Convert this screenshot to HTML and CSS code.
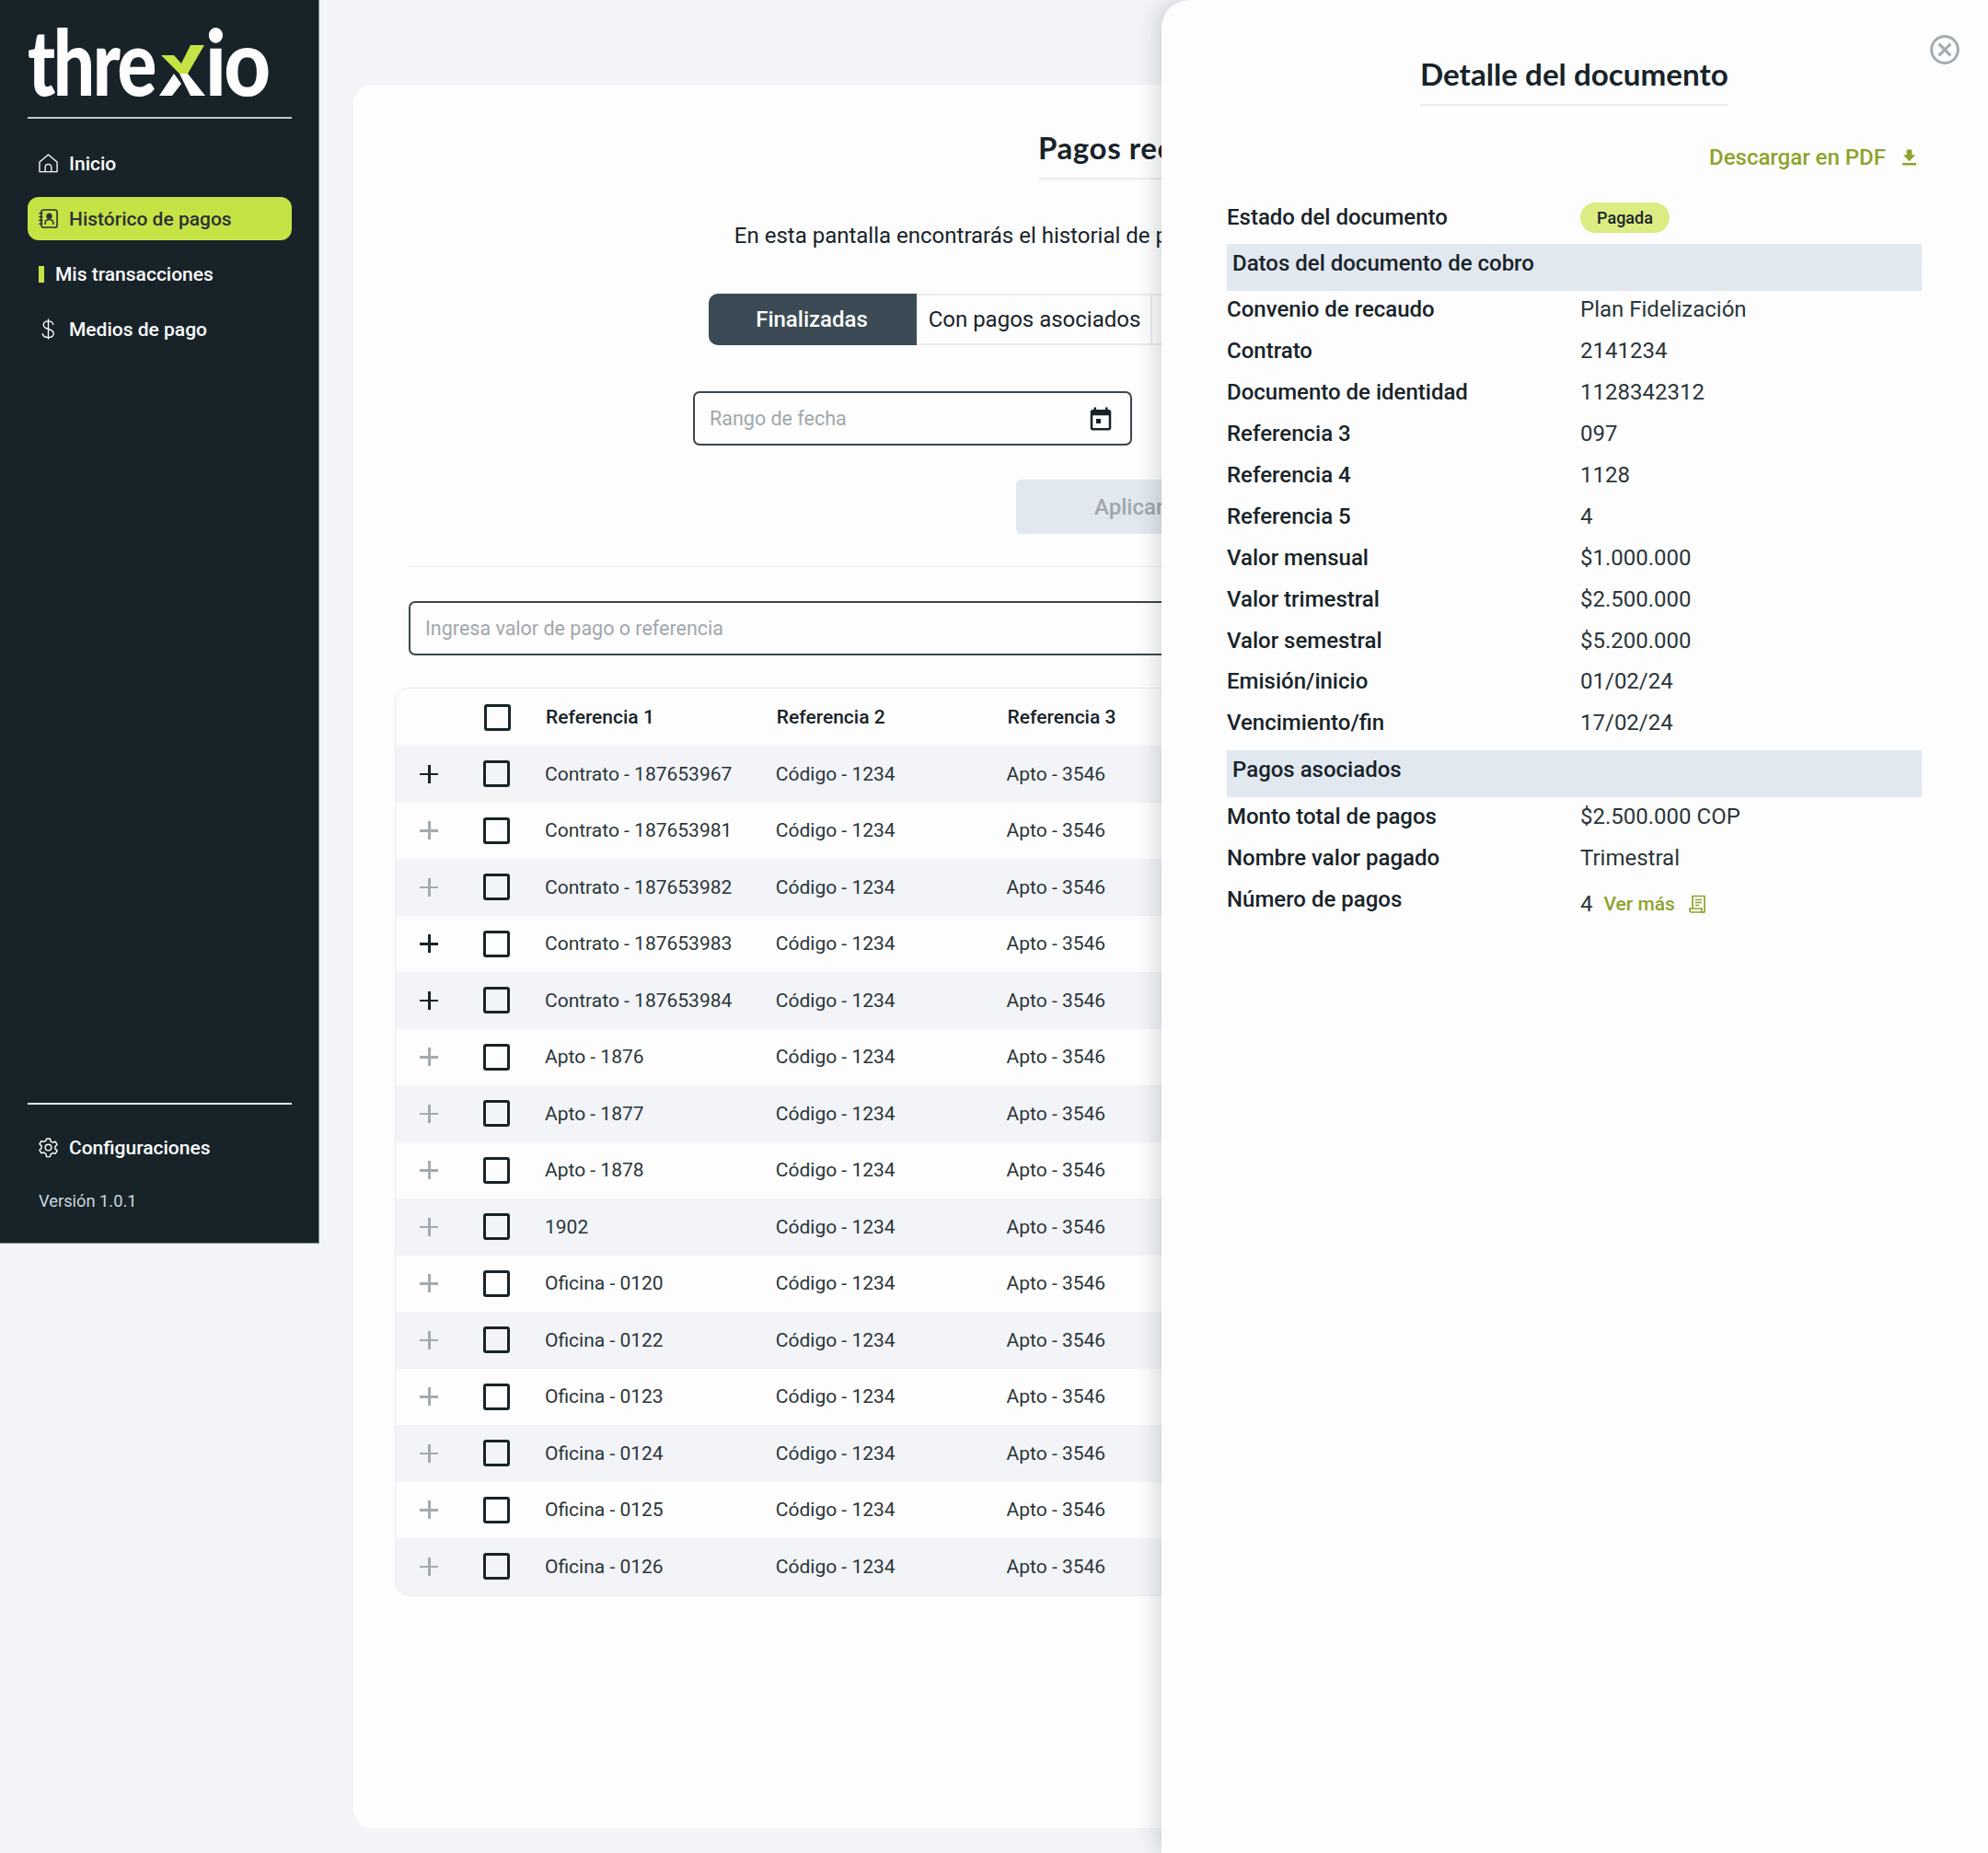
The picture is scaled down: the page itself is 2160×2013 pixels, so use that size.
FILE: index.html
```html
<!DOCTYPE html>
<html>
  <head>
    <meta charset="utf-8">
    <title>Threxio</title>
    <link rel="stylesheet" href="styles.css">
  </head>
  <body>
    <aside class="sidebar">
      <div class="logo">
        <span class="logo-left">thre</span><svg class="logo-x" viewBox="0 0 50 56"><path fill="#fdfdfd" d="M0 55 16 31 24 42 14 55zM22 31h9l19 24H34z"/><path fill="#c6e345" d="M2 11h14l8 9L34 0h15L31 31h-9z"/></svg><span class="logo-right">io</span>
      </div>
      <nav class="nav">
        <a class="nav-item">
          <svg class="nav-icon" viewBox="1 1 22 22" fill="none" stroke="currentColor" stroke-width="1.4" stroke-linejoin="round"><path d="M2 21.5V10.5L12 2l10 8.500v11z"/><path d="M8.500 21.500v-5a3.500 3.500 0 0 1 7 0v5"/></svg>
          Inicio
        </a>
        <a class="nav-item active">
          <svg class="nav-icon" viewBox="1 1 22 22" fill="none" stroke="currentColor" stroke-width="1.7" stroke-linecap="round"><rect x="4" y="2" width="18" height="20" rx="2.500"/><path d="M2 6h3M2 10h3M2 14h3M2 18h3"/><circle cx="13" cy="9" r="2.500" fill="currentColor"/><path d="M8.500 18v-1.500a4.500 3.500 0 0 1 9 0V18"/></svg>
          Histórico de pagos
        </a>
        <a class="nav-item sub">
          <span class="nav-bar"></span>
          Mis transacciones
        </a>
        <a class="nav-item">
          <svg class="nav-icon" viewBox="1 0 22 24" fill="none" stroke="currentColor" stroke-width="1.4" stroke-linecap="round"><path d="M12 1v22M17.500 6.500c-.5-2.300-2.500-3.500-5.500-3.500-3.300 0-5.500 1.700-5.500 4.300s2.200 3.700 5.500 4.700 6 2 6 5-2.700 4.500-6 4.500-6-1.500-6.500-4"/></svg>
          Medios de pago
        </a>
      </nav>
      <div class="side-bottom">
        <a class="nav-item">
          <svg class="nav-icon" viewBox="1 1 22 22" fill="none" stroke="currentColor" stroke-width="1.5" stroke-linejoin="round"><path d="M10 2h4l.7 3 2.300 1.300 3-.9 2 3.400-2.200 2.200v2.600l2.200 2.200-2 3.400-3-.9-2.300 1.300-.7 3h-4l-.7-3L7 17.600l-3 .9-2-3.400 2.200-2.200v-2.600L2 8.100l2-3.400 3 .9 2.300-1.300z"/><circle cx="12" cy="12" r="3.500"/></svg>
          Configuraciones
        </a>
        <p class="version">Versión 1.0.1</p>
      </div>
    </aside>

    <main class="main">
      <section class="card">
        <h1 class="title">Pagos recibidos</h1>
        <p class="intro">En esta pantalla encontrarás el historial de pagos realizados de todos tus documentos</p>
        <div class="tabs">
          <div class="tab selected">Finalizadas</div>
          <div class="tab">Con pagos asociados</div>
          <div class="tab wide">Pendientes</div>
        </div>
        <div class="filters">
          <div class="field">
            <span>Rango de fecha</span>
            <svg class="cal" viewBox="0 0 24 24" fill="#182329"><path d="M19 4h-1V2h-2v2H8V2H6v2H5c-1.100 0-2 .9-2 2v14c0 1.100.9 2 2 2h14c1.100 0 2-.9 2-2V6c0-1.100-.9-2-2-2zm0 16H5V9h14v11zM8 12h4v4H8z"/></svg>
          </div>
          <div class="field"><span>Estado</span></div>
        </div>
        <button class="apply">Aplicar</button>
        <hr class="divider">
        <div class="field search"><span>Ingresa valor de pago o referencia</span></div>

        <div class="table">
          <div class="row head"><span></span><span class="check"></span><span>Referencia 1</span><span>Referencia 2</span><span>Referencia 3</span></div>
          <div class="row"><span class="plus on"></span><span class="check"></span><span>Contrato - 187653967</span><span>Código - 1234</span><span>Apto - 3546</span></div>
          <div class="row"><span class="plus"></span><span class="check"></span><span>Contrato - 187653981</span><span>Código - 1234</span><span>Apto - 3546</span></div>
          <div class="row"><span class="plus"></span><span class="check"></span><span>Contrato - 187653982</span><span>Código - 1234</span><span>Apto - 3546</span></div>
          <div class="row"><span class="plus on"></span><span class="check"></span><span>Contrato - 187653983</span><span>Código - 1234</span><span>Apto - 3546</span></div>
          <div class="row"><span class="plus on"></span><span class="check"></span><span>Contrato - 187653984</span><span>Código - 1234</span><span>Apto - 3546</span></div>
          <div class="row"><span class="plus"></span><span class="check"></span><span>Apto - 1876</span><span>Código - 1234</span><span>Apto - 3546</span></div>
          <div class="row"><span class="plus"></span><span class="check"></span><span>Apto - 1877</span><span>Código - 1234</span><span>Apto - 3546</span></div>
          <div class="row"><span class="plus"></span><span class="check"></span><span>Apto - 1878</span><span>Código - 1234</span><span>Apto - 3546</span></div>
          <div class="row"><span class="plus"></span><span class="check"></span><span>1902</span><span>Código - 1234</span><span>Apto - 3546</span></div>
          <div class="row"><span class="plus"></span><span class="check"></span><span>Oficina - 0120</span><span>Código - 1234</span><span>Apto - 3546</span></div>
          <div class="row"><span class="plus"></span><span class="check"></span><span>Oficina - 0122</span><span>Código - 1234</span><span>Apto - 3546</span></div>
          <div class="row"><span class="plus"></span><span class="check"></span><span>Oficina - 0123</span><span>Código - 1234</span><span>Apto - 3546</span></div>
          <div class="row"><span class="plus"></span><span class="check"></span><span>Oficina - 0124</span><span>Código - 1234</span><span>Apto - 3546</span></div>
          <div class="row"><span class="plus"></span><span class="check"></span><span>Oficina - 0125</span><span>Código - 1234</span><span>Apto - 3546</span></div>
          <div class="row"><span class="plus"></span><span class="check"></span><span>Oficina - 0126</span><span>Código - 1234</span><span>Apto - 3546</span></div>
        </div>
      </section>
    </main>

    <aside class="panel">
      <svg class="close" viewBox="0 0 30 30" fill="none" stroke="#a3abb1" stroke-width="2.800"><circle cx="15" cy="15" r="13.500"/><path d="M9 9l12 12M21 9 9 21"/></svg>
      <h2 class="panel-title">Detalle del documento</h2>
      <a class="download">
        Descargar en PDF
        <svg class="download-icon" viewBox="0 0 16 18" fill="#8da32c"><path d="M5 0h6v6h4l-7 7.500L1 6h4zM0 15.500h16V18H0z"/></svg>
      </a>
      <div class="detail top">
        <span class="label">Estado del documento</span>
        <span class="value"><span class="badge">Pagada</span></span>
      </div>
      <div class="band">Datos del documento de cobro</div>
      <div class="detail"><span class="label">Convenio de recaudo</span><span class="value">Plan Fidelización</span></div>
      <div class="detail"><span class="label">Contrato</span><span class="value">2141234</span></div>
      <div class="detail"><span class="label">Documento de identidad</span><span class="value">1128342312</span></div>
      <div class="detail"><span class="label">Referencia 3</span><span class="value">097</span></div>
      <div class="detail"><span class="label">Referencia 4</span><span class="value">1128</span></div>
      <div class="detail"><span class="label">Referencia 5</span><span class="value">4</span></div>
      <div class="detail"><span class="label">Valor mensual</span><span class="value">$1.000.000</span></div>
      <div class="detail"><span class="label">Valor trimestral</span><span class="value">$2.500.000</span></div>
      <div class="detail"><span class="label">Valor semestral</span><span class="value">$5.200.000</span></div>
      <div class="detail"><span class="label">Emisión/inicio</span><span class="value">01/02/24</span></div>
      <div class="detail"><span class="label">Vencimiento/fin</span><span class="value">17/02/24</span></div>
      <div class="band second">Pagos asociados</div>
      <div class="detail"><span class="label">Monto total de pagos</span><span class="value">$2.500.000 COP</span></div>
      <div class="detail"><span class="label">Nombre valor pagado</span><span class="value">Trimestral</span></div>
      <div class="detail last">
        <span class="label">Número de pagos</span>
        <span class="value more">
          4
          <a class="see-more">Ver más</a>
          <svg class="receipt" viewBox="0 0 18 20" fill="none" stroke="#8da32c" stroke-width="1.700"><path d="M4 15V1.500h13V18a1.500 1.500 0 0 1-3 0v-3H1v2.500A1.500 1.500 0 0 0 2.500 19H15.500"/><path d="M7 5.500h7M7 8.500h7M7 11.500h4"/></svg>
        </span>
      </div>
    </aside>
  </body>
</html>
```

FILE: styles.css
```css
* {
  box-sizing: border-box;
}

html,
body {
  margin: 0;
  height: 2013px;
  overflow: hidden;
}

body {
  display: flex;
  align-items: flex-start;
  background: #f2f4f8;
  color: #182329;
  font-family: Roboto, "Liberation Sans", sans-serif;
  font-size: 24px;
}

/* sidebar */
.sidebar {
  width: 347px;
  height: 1351px;
  flex-shrink: 0;
  display: flex;
  flex-direction: column;
  padding: 0 29px 0 30px;
  background: #182329;
  color: #fdfdfd;
  border-right: 1px solid #7c868c;
  border-bottom: 1px solid #7c868c;
}

.logo {
  height: 129px;
  padding-top: 20px;
  display: flex;
  align-items: flex-start;
  border-bottom: 2px solid #c4c8cb;
  font-family: Lato, sans-serif;
  font-size: 100px;
  font-weight: 900;
  line-height: 90px;
  letter-spacing: -3px;
}

.logo-left,
.logo-right {
  display: block;
  transform: scaleX(0.8);
  transform-origin: left;
}

.logo-left {
  width: 143px;
}

.logo-right {
  width: 69px;
  transform: scaleX(0.88);
}

.logo-x {
  width: 50px;
  height: 56px;
  margin: 29px 0 0 0;
  flex-shrink: 0;
}

.nav {
  margin-top: 25px;
  display: flex;
  flex-direction: column;
  gap: 13px;
  flex-grow: 1;
}

.nav-item {
  height: 47px;
  display: flex;
  align-items: center;
  gap: 12px;
  padding-left: 12px;
  border-radius: 12px;
  font-size: 21px;
  font-weight: 500;
}

.nav-item.active {
  background: #c6e345;
  color: #2b3033;
}

.nav-item.sub {
  gap: 12px;
}

.nav-icon {
  width: 21px;
  height: 23px;
  flex-shrink: 0;
}

.nav-bar {
  width: 6px;
  height: 18px;
  background: #c6e345;
}

.side-bottom {
  height: 152px;
  border-top: 2px solid #e4e6e8;
  padding-top: 23px;
}

.version {
  margin: 24px 0 0 12px;
  font-size: 18.300px;
  color: #c9d6df;
}

/* main card */
.main {
  flex-grow: 1;
  padding: 92px 37px 0;
}

.card {
  height: 1894px;
  display: flex;
  flex-direction: column;
  align-items: center;
  padding: 0 45px;
  background: #fdfdfd;
  border-radius: 20px;
}

.title {
  margin: 48px 0 0;
  width: 252px;
  padding-bottom: 13px;
  border-bottom: 2px solid #e8edf3;
  font-family: Lato, sans-serif;
  font-size: 33px;
  font-weight: 700;
  line-height: 40px;
  letter-spacing: 0.6px;
  white-space: nowrap;
}

.intro {
  margin: 45px 0 0;
  padding-left: 5.500px;
  font-size: 24px;
  line-height: 32px;
  white-space: nowrap;
}

.tabs {
  margin-top: 47px;
  width: 968px;
  height: 56px;
  display: flex;
  flex-shrink: 0;
  border: 2px solid #e8edf3;
  border-radius: 10px;
}

.tab {
  width: 256px;
  display: flex;
  align-items: center;
  justify-content: center;
  margin: -2px 0;
  padding-left: 2px;
  border-right: 2px solid #e8edf3;
}

.tab.selected {
  width: 226px;
  margin-left: -2px;
  padding: 0 2px 0 0;
  background: #3b4a54;
  color: #fdfdfd;
  font-weight: 500;
  border-radius: 10px 0 0 10px;
  border-right: 0;
}

.tab.wide {
  flex-grow: 1;
  border-right: 0;
}

.filters {
  margin-top: 50px;
  width: 1002px;
  display: flex;
  justify-content: space-between;
  flex-shrink: 0;
}

.field {
  width: 477px;
  height: 59px;
  display: flex;
  align-items: center;
  justify-content: space-between;
  padding: 0 17px 0 16px;
  border: 2px solid #3b464d;
  border-radius: 7px;
  font-size: 21.500px;
  color: #a0a7ac;
}

.cal {
  width: 30px;
  height: 30px;
}

.apply {
  margin-top: 37px;
  width: 300px;
  height: 59px;
  flex-shrink: 0;
  padding: 0 0 0 85px;
  border: 0;
  border-radius: 6px;
  background: #e2e8f0;
  color: #a0a7ac;
  font-family: inherit;
  font-size: 24px;
  font-weight: 500;
  text-align: left;
}

.divider {
  margin: 35px 0 0;
  width: 1620px;
  height: 1px;
  flex-shrink: 0;
  border: 0;
  background: #e8edf3;
}

.search {
  margin-top: 37px;
  width: 1620px;
  flex-shrink: 0;
}

/* table */
.table {
  margin-top: 35px;
  width: 1650px;
  flex-shrink: 0;
  border: 1px solid #e8edf3;
  border-radius: 16px;
  overflow: hidden;
}

.row {
  height: 61.500px;
  display: grid;
  grid-template-columns: 72px 75px repeat(3, 250.800px);
  align-items: center;
  font-size: 21px;
  color: #2b3539;
}

.row:nth-child(even) {
  background: #f2f4f8;
}

.row > span:nth-child(n + 3) {
  padding-left: 15px;
}

.row.head {
  height: 62px;
  font-weight: 500;
  color: #182329;
}

.row.head > span:nth-child(n + 3) {
  padding-left: 16px;
}

.row.head .check {
  margin-left: 1px;
}

.check {
  justify-self: center;
  width: 29px;
  height: 29px;
  border: 3.500px solid #182329;
  border-radius: 3px;
}

.plus {
  position: relative;
  justify-self: center;
  width: 20px;
  height: 20px;
  color: #a3abb1;
}

.plus.on {
  color: #182329;
}

.plus::before,
.plus::after {
  content: "";
  position: absolute;
  background: currentColor;
}

.plus::before {
  left: 0;
  right: 0;
  top: 9px;
  height: 2.500px;
}

.plus::after {
  top: 0;
  bottom: 0;
  left: 9px;
  width: 2.500px;
}

/* detail panel */
.panel {
  position: absolute;
  top: 0;
  right: 0;
  width: 898px;
  height: 2013px;
  padding: 0 72px 0 71px;
  background: #fdfdfd;
  border-radius: 30px 0 0 0;
  box-shadow: -4px 0 24px rgba(24, 35, 41, 0.18);
}

.close {
  position: absolute;
  top: 38px;
  right: 31px;
  width: 32px;
  height: 32px;
}

.panel-title {
  width: 335px;
  margin: 0 auto;
  padding: 59px 0 12px;
  border-bottom: 2px solid #e8edf3;
  font-family: Lato, sans-serif;
  font-size: 33.200px;
  font-weight: 700;
  line-height: 42px;
  white-space: nowrap;
}

.download {
  margin-top: 40px;
  height: 32px;
  display: flex;
  justify-content: flex-end;
  align-items: center;
  gap: 18px;
  padding-right: 6px;
  color: #8da32c;
  font-weight: 500;
}

.download-icon {
  width: 15px;
  height: 18px;
}

.detail {
  height: 44.900px;
  display: grid;
  grid-template-columns: 384px 1fr;
  align-items: center;
  font-size: 24px;
}

.detail.top {
  margin-top: 28px;
  height: 50px;
  padding-bottom: 8px;
}

.label {
  font-weight: 500;
}

.value {
  font-weight: 400;
  color: #2b3539;
}

.badge {
  display: inline-block;
  width: 97px;
  height: 33px;
  border-radius: 17px;
  background: #dcec82;
  color: #182329;
  font-size: 18px;
  font-weight: 500;
  line-height: 33px;
  text-align: center;
}

.band {
  height: 51px;
  margin-bottom: -2px;
  padding: 0 6px;
  line-height: 42px;
  background: #e2e8f0;
  font-weight: 500;
}

.band.second {
  margin-top: 7px;
  margin-bottom: -1px;
}

.more {
  display: flex;
  align-items: center;
  gap: 12px;
  position: relative;
  top: 5px;
}

.see-more {
  color: #8da32c;
  font-size: 21px;
  font-weight: 500;
}

.receipt {
  width: 18px;
  height: 20px;
  margin-left: 3px;
}
```
